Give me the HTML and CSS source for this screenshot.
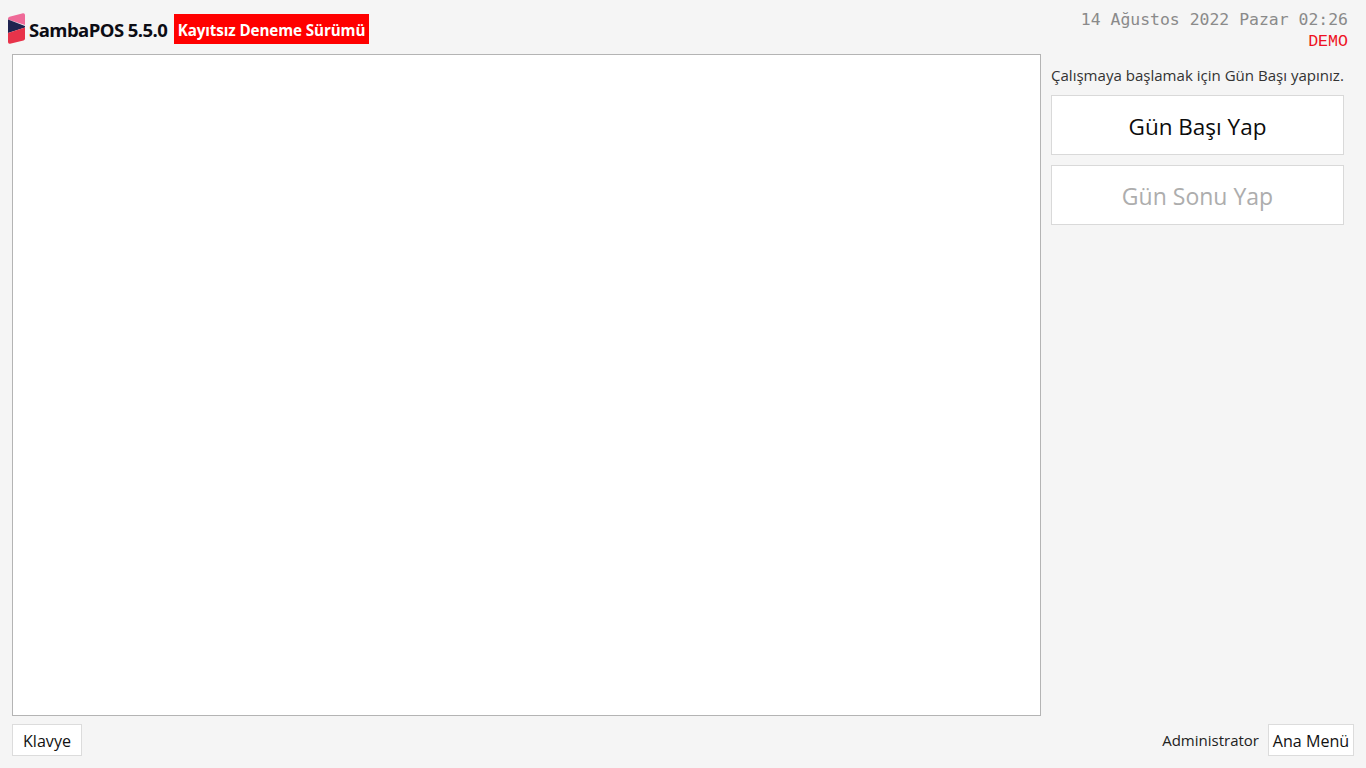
FILE: index.html
```html
<!DOCTYPE html>
<html lang="tr">
<head>
<meta charset="utf-8">
<title>SambaPOS</title>
<link rel="stylesheet" href="styles.css">
</head>
<body>
<div class="app">
  <header class="header">
    <div class="brand">
      <svg class="logo" width="17" height="31" viewBox="0 0 17 31" aria-hidden="true">
        <path d="M0 5.5 Q0 4.2 1.5 3.8 L15 0.2 Q17 0 17 2 V12 L0 6.5Z" fill="#ef6a98"/>
        <path d="M0 6.5 L17 13 V14.5 L0 20Z" fill="#1f2350"/>
        <path d="M0 20 L17 14.5 V25.5 Q17 27.2 15.5 27.6 L2 30.7 Q0 31 0 29Z" fill="#e8334a"/>
      </svg>
      <span class="brand-name">SambaPOS 5.5.0</span>
      <span class="badge">Kayıtsız Deneme Sürümü</span>
    </div>
    <div class="status">
      <div class="clock">14 Ağustos 2022 Pazar 02:26</div>
      <div class="demo">DEMO</div>
    </div>
  </header>
  <main class="main">
    <section class="canvas"></section>
    <aside class="side">
      <p class="hint">Çalışmaya başlamak için Gün Başı yapınız.</p>
      <button class="btn-big" type="button">Gün Başı Yap</button>
      <button class="btn-big is-disabled" type="button">Gün Sonu Yap</button>
    </aside>
  </main>
  <footer class="footer">
    <button class="btn-small btn-klavye" type="button">Klavye</button>
    <div class="user">
      <span class="user-name">Administrator</span>
      <button class="btn-small btn-menu" type="button">Ana Menü</button>
    </div>
  </footer>
</div>
</body>
</html>
```
FILE: styles.css
```css
* { box-sizing: border-box; }
html, body { margin: 0; height: 100%; }
body {
  background: #f5f5f5;
  font-family: "Open Sans", "Noto Sans", "Liberation Sans", sans-serif;
  color: #222;
  overflow: hidden;
}
.app { width: 1366px; height: 768px; display: flex; flex-direction: column; }
.header {
  height: 54px;
  display: flex;
  justify-content: space-between;
  padding: 13px 18px 0 8px;
}
.brand { display: flex; align-items: flex-start; }
.logo { display: block; flex: none; }
.brand-name {
  margin-left: 4px;
  margin-top: 4px;
  width: 139px;
  font-size: 18.5px;
  line-height: 25px;
  font-weight: 700;
  color: #0c0c14;
  letter-spacing: -0.55px;
  white-space: nowrap;
}
.badge {
  margin-left: 6px;
  margin-top: 1px;
  width: 195px;
  height: 30px;
  background: #ff0000;
  color: #fff;
  font-size: 15.2px;
  font-weight: 700;
  line-height: 32px;
  text-align: center;
  white-space: nowrap;
  letter-spacing: -0.1px;
}
.status { text-align: right; margin-top: -3px; }
.clock {
  font-family: "DejaVu Sans Mono", "Liberation Mono", monospace;
  font-size: 16.45px;
  line-height: 20px;
  color: #8a8a8a;
  white-space: nowrap;
}
.demo {
  font-family: "Liberation Mono", "DejaVu Sans Mono", monospace;
  font-size: 16.6px;
  line-height: 24px;
  color: #ee1122;
}
.main { height: 662px; display: flex; padding-left: 12px; }
.canvas {
  width: 1029px;
  height: 662px;
  background: #fff;
  border: 1px solid #b4b4b4;
}
.side { width: 293px; margin-left: 10px; }
.hint {
  margin: 0;
  height: 41px;
  padding-top: 11px;
  font-size: 15.05px;
  line-height: 20px;
  color: #333;
  white-space: nowrap;
}
.btn-big {
  display: block;
  width: 293px;
  height: 60px;
  margin-bottom: 10px;
  padding: 2px 0 0;
  background: #fff;
  border: 1px solid #d9d9d9;
  font-family: inherit;
  font-size: 22.5px;
  color: #0c0c0c;
}
.is-disabled { color: #adadad; font-size: 23px; }
.footer {
  display: flex;
  justify-content: space-between;
  padding: 8px 12px 0;
}
.btn-small {
  height: 32px;
  padding: 2px 0 0;
  background: #fff;
  border: 1px solid #dcdcdc;
  font-family: inherit;
  font-size: 16.1px;
  color: #111;
}
.btn-klavye { width: 70px; }
.btn-menu { width: 86px; white-space: nowrap; }
.user { display: flex; align-items: center; gap: 9px; }
.user-name { font-size: 15px; color: #222; }
```
